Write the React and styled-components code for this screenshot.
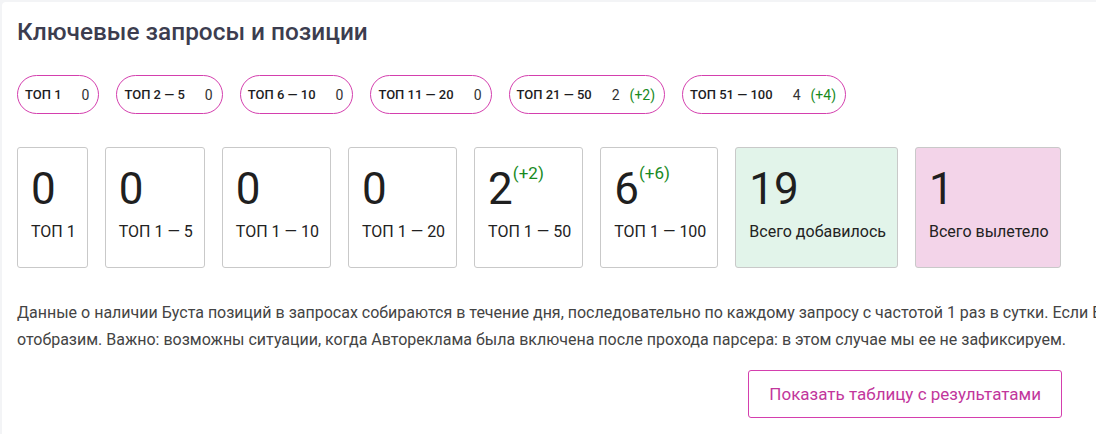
import React from 'react';
import styled, { createGlobalStyle } from 'styled-components';

const GlobalStyle = createGlobalStyle`
  html, body {
    margin: 0;
    padding: 0;
    background: #f3f4f6;
    overflow: hidden;
  }
  body {
    font-family: Roboto, "Noto Sans", Arial, sans-serif;
    color: #222;
  }
`;

const pills = [
  { label: 'ТОП 1', value: 0 },
  { label: 'ТОП 2 — 5', value: 0 },
  { label: 'ТОП 6 — 10', value: 0 },
  { label: 'ТОП 11 — 20', value: 0 },
  { label: 'ТОП 21 — 50', value: 2, delta: '+2' },
  { label: 'ТОП 51 — 100', value: 4, delta: '+4' },
];

const stats = [
  { value: 0, label: 'ТОП 1' },
  { value: 0, label: 'ТОП 1 — 5' },
  { value: 0, label: 'ТОП 1 — 10' },
  { value: 0, label: 'ТОП 1 — 20' },
  { value: 2, delta: '+2', label: 'ТОП 1 — 50' },
  { value: 6, delta: '+6', label: 'ТОП 1 — 100' },
  { value: 19, label: 'Всего добавилось', tone: 'green' },
  { value: 1, label: 'Всего вылетело', tone: 'pink' },
];

export default function App() {
  return (
    <>
      <GlobalStyle />
      <Card>
        <Title>Ключевые запросы и позиции</Title>
        <PillRow>
          {pills.map((p) => (
            <Pill key={p.label}>
              <PillLabel>{p.label}</PillLabel>
              <PillValue>
                {p.value}
                {p.delta && <Delta>({p.delta})</Delta>}
              </PillValue>
            </Pill>
          ))}
        </PillRow>
        <StatRow>
          {stats.map((s) => (
            <Stat key={s.label} $tone={s.tone}>
              <StatNumber>
                {s.value}
                {s.delta && <StatDelta>({s.delta})</StatDelta>}
              </StatNumber>
              <StatLabel>{s.label}</StatLabel>
            </Stat>
          ))}
        </StatRow>
        <Note>
          Данные о наличии Буста позиций в запросах собираются в течение дня, последовательно по каждому
          запросу с частотой 1 раз в сутки. Если Буст не найден, мы его не
          <br />
          отобразим. Важно: возможны ситуации, когда Автореклама была включена после прохода парсера: в
          этом случае мы ее не зафиксируем.
        </Note>
        <Footer>
          <OutlineButton type="button">Показать таблицу с результатами</OutlineButton>
        </Footer>
      </Card>
    </>
  );
}

const Card = styled.div`
  box-sizing: border-box;
  width: 1160px;
  min-height: 440px;
  margin: 2px 0 0 2px;
  padding: 16px 15px 20px;
  background: #fff;
  border-radius: 4px;
`;

const Title = styled.h2`
  margin: 0;
  font-size: 24.4px;
  line-height: 28px;
  font-weight: 500;
  color: #3c3d4f;
`;

const PillRow = styled.div`
  display: flex;
  gap: 17px;
  margin-top: 29px;
`;

const Pill = styled.div`
  box-sizing: border-box;
  height: 39px;
  display: inline-flex;
  align-items: center;
  gap: 20px;
  padding: 0 9px 0 7px;
  border: 1px solid #d43fae;
  border-radius: 20px;
`;

const PillLabel = styled.span`
  font-size: 13px;
  font-weight: 500;
  color: #1d1d1f;
`;

const PillValue = styled.span`
  display: inline-flex;
  gap: 10px;
  font-size: 14px;
  color: #333;
`;

const Delta = styled.span`
  color: #188a1e;
`;

const StatRow = styled.div`
  display: flex;
  gap: 17px;
  margin-top: 33px;
`;

const Stat = styled.div`
  box-sizing: border-box;
  height: 121px;
  padding: 16px 11px 0 13px;
  border: 1px solid #c9c9c9;
  border-radius: 3px;
  background: ${(p) => (p.$tone === 'green' ? '#e2f4ea' : p.$tone === 'pink' ? '#f3d4e9' : '#fff')};
`;

const StatNumber = styled.div`
  font-size: 44px;
  line-height: 51px;
  color: #1f1f1f;
  white-space: nowrap;
`;

const StatDelta = styled.span`
  display: inline-block;
  vertical-align: top;
  font-size: 17px;
  line-height: 18px;
  color: #188a1e;
`;

const StatLabel = styled.div`
  margin-top: 7px;
  font-size: 16px;
  color: #222;
  white-space: nowrap;
`;

const Note = styled.p`
  margin: 31px 0 0;
  font-size: 16px;
  line-height: 27px;
  color: #444;
  white-space: nowrap;
`;

const Footer = styled.div`
  width: 1045px;
  display: flex;
  justify-content: flex-end;
  margin-top: 17px;
`;

const OutlineButton = styled.button`
  box-sizing: border-box;
  height: 48px;
  padding: 0 20px;
  border: 1px solid #d43fae;
  border-radius: 3px;
  background: #fff;
  font-family: Roboto, "Noto Sans", Arial, sans-serif;
  font-size: 17px;
  color: #c2369c;
  cursor: pointer;
`;
